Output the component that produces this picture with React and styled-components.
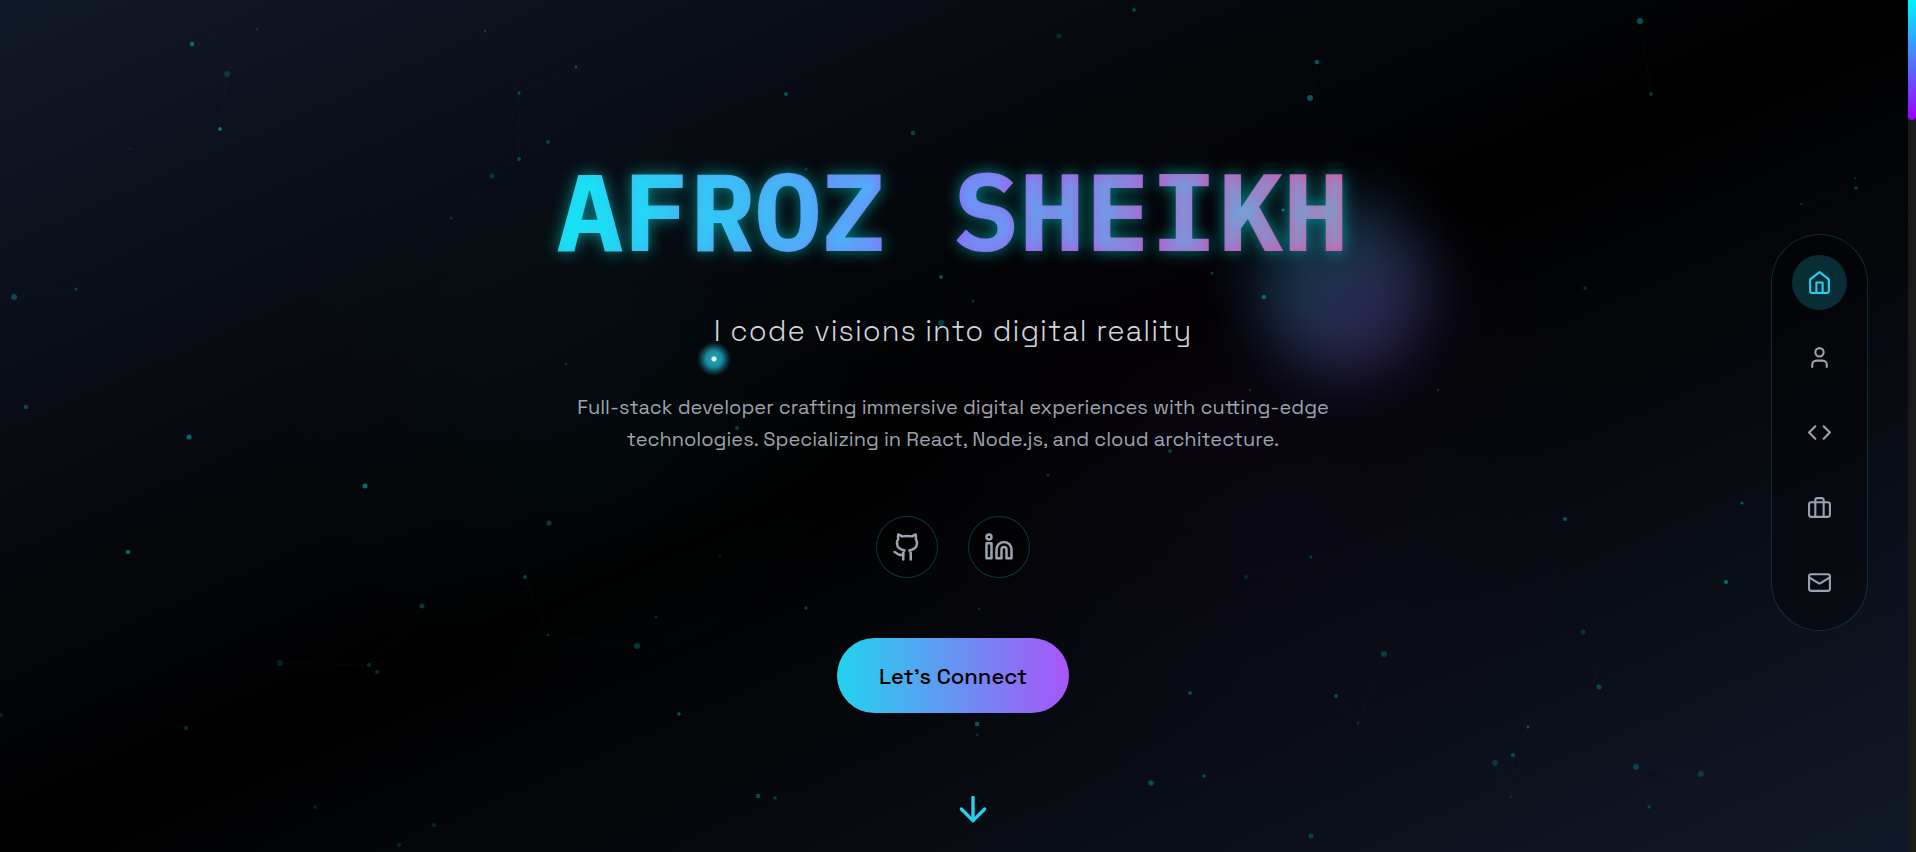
import React from "react";
import styled, { createGlobalStyle } from "styled-components";
import { Github, Linkedin, User, Code, ArrowDown } from "lucide-react";

const GlobalStyle = createGlobalStyle`
  *, *::before, *::after { box-sizing: border-box; }
  body {
    margin: 0;
    background: #000;
    color: #fff;
    font-family: "Space Grotesk", Inter, sans-serif;
  }
`;

const Page = styled.div`
  display: grid;
  grid-template-columns: minmax(0, 1fr) 8px;
  min-height: 100vh;
`;

const Stage = styled.div`
  position: relative;
  display: grid;
  isolation: isolate;
  overflow: hidden;
  background: linear-gradient(to bottom right, #111827, #000, #111827);
`;

const Backdrop = styled.div`
  position: absolute;
  inset: 0;
  z-index: -1;
  pointer-events: none;
  background:
    radial-gradient(circle at 30% 46%, rgba(0, 255, 255, 0.024), transparent 300px),
    radial-gradient(circle at 65% 54%, rgba(168, 40, 247, 0.036), transparent 360px);
`;

const Field = styled.svg`
  position: absolute;
  inset: 0;
  width: 100%;
  height: 100%;
`;

const Orb = styled.div`
  position: absolute;
  left: 66%;
  top: 24%;
  width: 170px;
  height: 170px;
  border-radius: 50%;
  background: linear-gradient(135deg, #22d3ee, #a855f7);
  opacity: 0.3;
  filter: blur(30px);
`;

const CursorGlow = styled.div`
  position: absolute;
  z-index: 2;
  left: 714px;
  top: 359px;
  width: 36px;
  height: 36px;
  margin: -18px 0 0 -18px;
  border-radius: 50%;
  pointer-events: none;
  background: radial-gradient(
    circle,
    #fff 0 2px,
    rgba(34, 211, 238, 0.75) 3px,
    rgba(34, 211, 238, 0.65) 8px,
    rgba(34, 211, 238, 0.25) 13px,
    transparent 17px
  );
`;

const Hero = styled.main`
  grid-area: 1 / 1;
  display: grid;
  grid-template-rows: 1fr auto 1fr;
  justify-items: center;
  padding-right: 2px;
  text-align: center;
`;

const HeroContent = styled.section`
  grid-row: 2;
  display: flex;
  flex-direction: column;
  align-items: center;
`;

const Title = styled.h1`
  margin: 0 0 26px;
  font: 700 110px/142px "IBM Plex Mono", "DejaVu Sans Mono", monospace;
  color: transparent;
  background: linear-gradient(to right, #22d3ee, #a855f7, #ec4899);
  -webkit-background-clip: text;
  background-clip: text;
  text-shadow: 0 0 16px rgba(0, 255, 255, 0.5);
`;

const Tagline = styled.p`
  margin: 0 0 36px;
  font-size: 29px;
  line-height: 48px;
  font-weight: 300;
  letter-spacing: 1px;
  color: #d1d5db;
`;

const Summary = styled.p`
  max-width: 800px;
  margin: 0 0 61px;
  font-size: 20px;
  line-height: 32px;
  color: #9ca3af;
`;

const SocialRow = styled.div`
  display: flex;
  gap: 30px;
  margin-bottom: 60px;
`;

const SocialLink = styled.a`
  display: grid;
  place-items: center;
  width: 62px;
  height: 62px;
  border: 1px solid rgba(34, 211, 238, 0.25);
  border-radius: 50%;
  background: rgba(0, 0, 0, 0.3);
  color: #9ca3af;
`;

const ConnectButton = styled.button`
  height: 75px;
  padding: 0 42px;
  border: 0;
  border-radius: 38px;
  background: linear-gradient(to right, #22d3ee, #a855f7);
  color: #000;
  font: inherit;
  font-size: 22px;
  font-weight: 500;
`;

const ScrollCue = styled.a`
  grid-row: 3;
  align-self: end;
  justify-self: start;
  display: block;
  height: 40px;
  margin: 0 0 23px 50%;
  color: #22d3ee;
`;

const SideNav = styled.nav`
  grid-area: 1 / 1;
  align-self: center;
  justify-self: end;
  display: flex;
  flex-direction: column;
  gap: 20px;
  margin: 12px 40px 0 0;
  padding: 20px;
  border: 1px solid rgba(34, 211, 238, 0.2);
  border-radius: 50px;
  background: rgba(0, 0, 0, 0.3);
`;

const NavButton = styled.button`
  display: grid;
  place-items: center;
  width: 55px;
  height: 55px;
  padding: 0;
  border: 0;
  border-radius: 50%;
  background: ${(p) => (p.$active ? "rgba(34, 211, 238, 0.2)" : "transparent")};
  color: ${(p) => (p.$active ? "#22d3ee" : "#9ca3af")};
`;

const ScrollTrack = styled.div`
  background: #1a1a1a;
`;

const ScrollThumb = styled.div`
  height: 120px;
  border-radius: 0 0 4px 4px;
  background: linear-gradient(to bottom, #00f5ff, #9d00ff);
`;

const LineIcon = ({ size = 25, children }) => (
  <svg
    width={size}
    height={size}
    viewBox="0 0 24 24"
    fill="none"
    stroke="currentColor"
    strokeWidth="2"
    strokeLinecap="round"
    strokeLinejoin="round"
    aria-hidden="true"
  >
    {children}
  </svg>
);

const HomeIcon = () => (
  <LineIcon>
    <path d="m3 9 9-7 9 7v11a2 2 0 0 1-2 2H5a2 2 0 0 1-2-2z" />
    <polyline points="9 22 9 12 15 12 15 22" />
  </LineIcon>
);

const BriefcaseIcon = () => (
  <LineIcon>
    <rect width="20" height="14" x="2" y="7" rx="2" />
    <path d="M16 21V5a2 2 0 0 0-2-2h-4a2 2 0 0 0-2 2v16" />
  </LineIcon>
);

const MailIcon = () => (
  <LineIcon>
    <rect width="20" height="16" x="2" y="4" rx="2" />
    <path d="m22 7-8.97 5.7a1.94 1.94 0 0 1-2.06 0L2 7" />
  </LineIcon>
);

const navItems = [
  { label: "Home", icon: <HomeIcon /> },
  { label: "About", icon: <User size={25} /> },
  { label: "Skills", icon: <Code size={25} /> },
  { label: "Projects", icon: <BriefcaseIcon /> },
  { label: "Contact", icon: <MailIcon /> },
];

// Each particle: x, y, radius, opacity
const particles = [
  [192, 44, 2.2, 0.4], [257, 29, 1.3, 0.15], [227, 74, 3, 0.15], [220, 129, 2, 0.4],
  [130, 149, 1, 0.12], [485, 31, 1.2, 0.25], [576, 67, 1.4, 0.3], [519, 93, 1.5, 0.3],
  [548, 142, 2, 0.2], [519, 159, 2, 0.25], [492, 176, 2.5, 0.18], [451, 218, 1.5, 0.18],
  [14, 297, 3, 0.25], [76, 289, 1.5, 0.25], [26, 407, 2.3, 0.25], [566, 364, 1.5, 0.15],
  [189, 437, 2.5, 0.42], [365, 486, 2.5, 0.42], [128, 552, 2, 0.48], [549, 523, 2.5, 0.25],
  [525, 577, 2, 0.27], [422, 606, 2.5, 0.22], [548, 635, 1.2, 0.22], [637, 646, 3, 0.22],
  [280, 663, 3, 0.13], [369, 665, 2, 0.18], [377, 672, 2, 0.18], [1, 715, 2, 0.15],
  [186, 728, 2, 0.22], [315, 807, 2, 0.12], [434, 825, 2, 0.15], [399, 845, 2, 0.15],
  [1311, 557, 1.5, 0.25], [1565, 519, 2, 0.33], [1742, 503, 1.5, 0.35], [1726, 582, 2, 0.42],
  [1583, 632, 2.5, 0.15], [1599, 687, 2.5, 0.25], [1384, 654, 3, 0.2], [1336, 696, 2, 0.28],
  [1358, 723, 1.5, 0.17], [1528, 727, 1.5, 0.3], [1495, 763, 3, 0.17], [1513, 755, 2, 0.27],
  [1511, 797, 1.4, 0.12], [1636, 767, 3, 0.2], [1701, 774, 3, 0.17], [1649, 807, 1.5, 0.27],
  [1311, 836, 2.5, 0.22], [1134, 10, 2, 0.25], [1059, 36, 2.5, 0.13], [786, 94, 2, 0.3],
  [913, 133, 2.3, 0.27], [1640, 21, 3, 0.33], [1317, 62, 2.3, 0.33], [1310, 98, 3, 0.35],
  [1651, 94, 2, 0.22], [1283, 210, 1.5, 0.45], [806, 169, 1.5, 0.2], [941, 277, 2, 0.33],
  [973, 301, 1.5, 0.2], [941, 323, 3, 0.25], [1212, 273, 1.6, 0.25], [1264, 297, 2.3, 0.35],
  [1250, 390, 1.5, 0.18], [1438, 390, 1.3, 0.22], [1585, 288, 1.8, 0.2], [1801, 204, 1.5, 0.15],
  [1856, 188, 1.8, 0.25], [1855, 178, 1.2, 0.15], [737, 428, 2, 0.25], [1170, 451, 2, 0.25],
  [1048, 475, 1.5, 0.22], [1246, 577, 2, 0.15], [806, 608, 1.8, 0.25], [656, 617, 1.5, 0.18],
  [979, 609, 1.3, 0.18], [1190, 693, 1.8, 0.33], [679, 714, 1.8, 0.33], [977, 724, 2.3, 0.35],
  [977, 735, 1.5, 0.18], [1151, 783, 2.8, 0.27], [1204, 776, 1.8, 0.27], [758, 796, 2.2, 0.3],
  [775, 798, 1.8, 0.25], [720, 556, 1, 0.15],
];

const links =
  "M192 44 257 29 227 74ZM227 74 220 129M485 31 519 93 548 142 576 67 519 93V159M548 142 492 176 451 218M519 93 492 176" +
  "M14 297 76 289M549 523 525 577 548 635 637 646M422 606 369 665 280 663M422 606 377 672 369 665" +
  "M399 845 434 825M1246 577 1311 557M1583 632 1599 687M1528 727 1495 763 1511 797 1513 755 1528 727M1495 763 1513 755" +
  "M1384 654 1336 696 1358 723ZM1636 767 1701 774 1649 807ZM1317 62 1310 98M1640 21 1651 94" +
  "M941 277 973 301 941 323ZM1212 273 1264 297M1801 204 1856 188 1855 178M1151 783 1204 776M737 428 720 380";

export default function App() {
  return (
    <>
      <GlobalStyle />
      <Page>
        <Stage>
          <Backdrop>
            <Field viewBox="0 0 1908 852" preserveAspectRatio="xMidYMid slice" aria-hidden="true">
              <path d={links} fill="none" stroke="#00ffff" strokeOpacity="0.03" />
              {particles.map(([x, y, r, o]) => (
                <circle key={`${x}-${y}`} cx={x} cy={y} r={r} fill="#00f5ff" opacity={o} />
              ))}
            </Field>
            <Orb />
          </Backdrop>
          <Hero>
            <HeroContent>
              <Title>AFROZ SHEIKH</Title>
              <Tagline>I code visions into digital reality</Tagline>
              <Summary>
                Full-stack developer crafting immersive digital experiences with cutting-edge
                technologies. Specializing in React, Node.js, and cloud architecture.
              </Summary>
              <SocialRow>
                <SocialLink href="#github" aria-label="GitHub">
                  <Github size={30} />
                </SocialLink>
                <SocialLink href="#linkedin" aria-label="LinkedIn">
                  <Linkedin size={30} />
                </SocialLink>
              </SocialRow>
              <ConnectButton type="button">Let’s Connect</ConnectButton>
            </HeroContent>
            <ScrollCue href="#about" aria-label="Scroll down">
              <ArrowDown size={40} />
            </ScrollCue>
          </Hero>
          <SideNav aria-label="Sections">
            {navItems.map((item, i) => (
              <NavButton key={item.label} type="button" aria-label={item.label} $active={i === 0}>
                {item.icon}
              </NavButton>
            ))}
          </SideNav>
          <CursorGlow />
        </Stage>
        <ScrollTrack>
          <ScrollThumb />
        </ScrollTrack>
      </Page>
    </>
  );
}
